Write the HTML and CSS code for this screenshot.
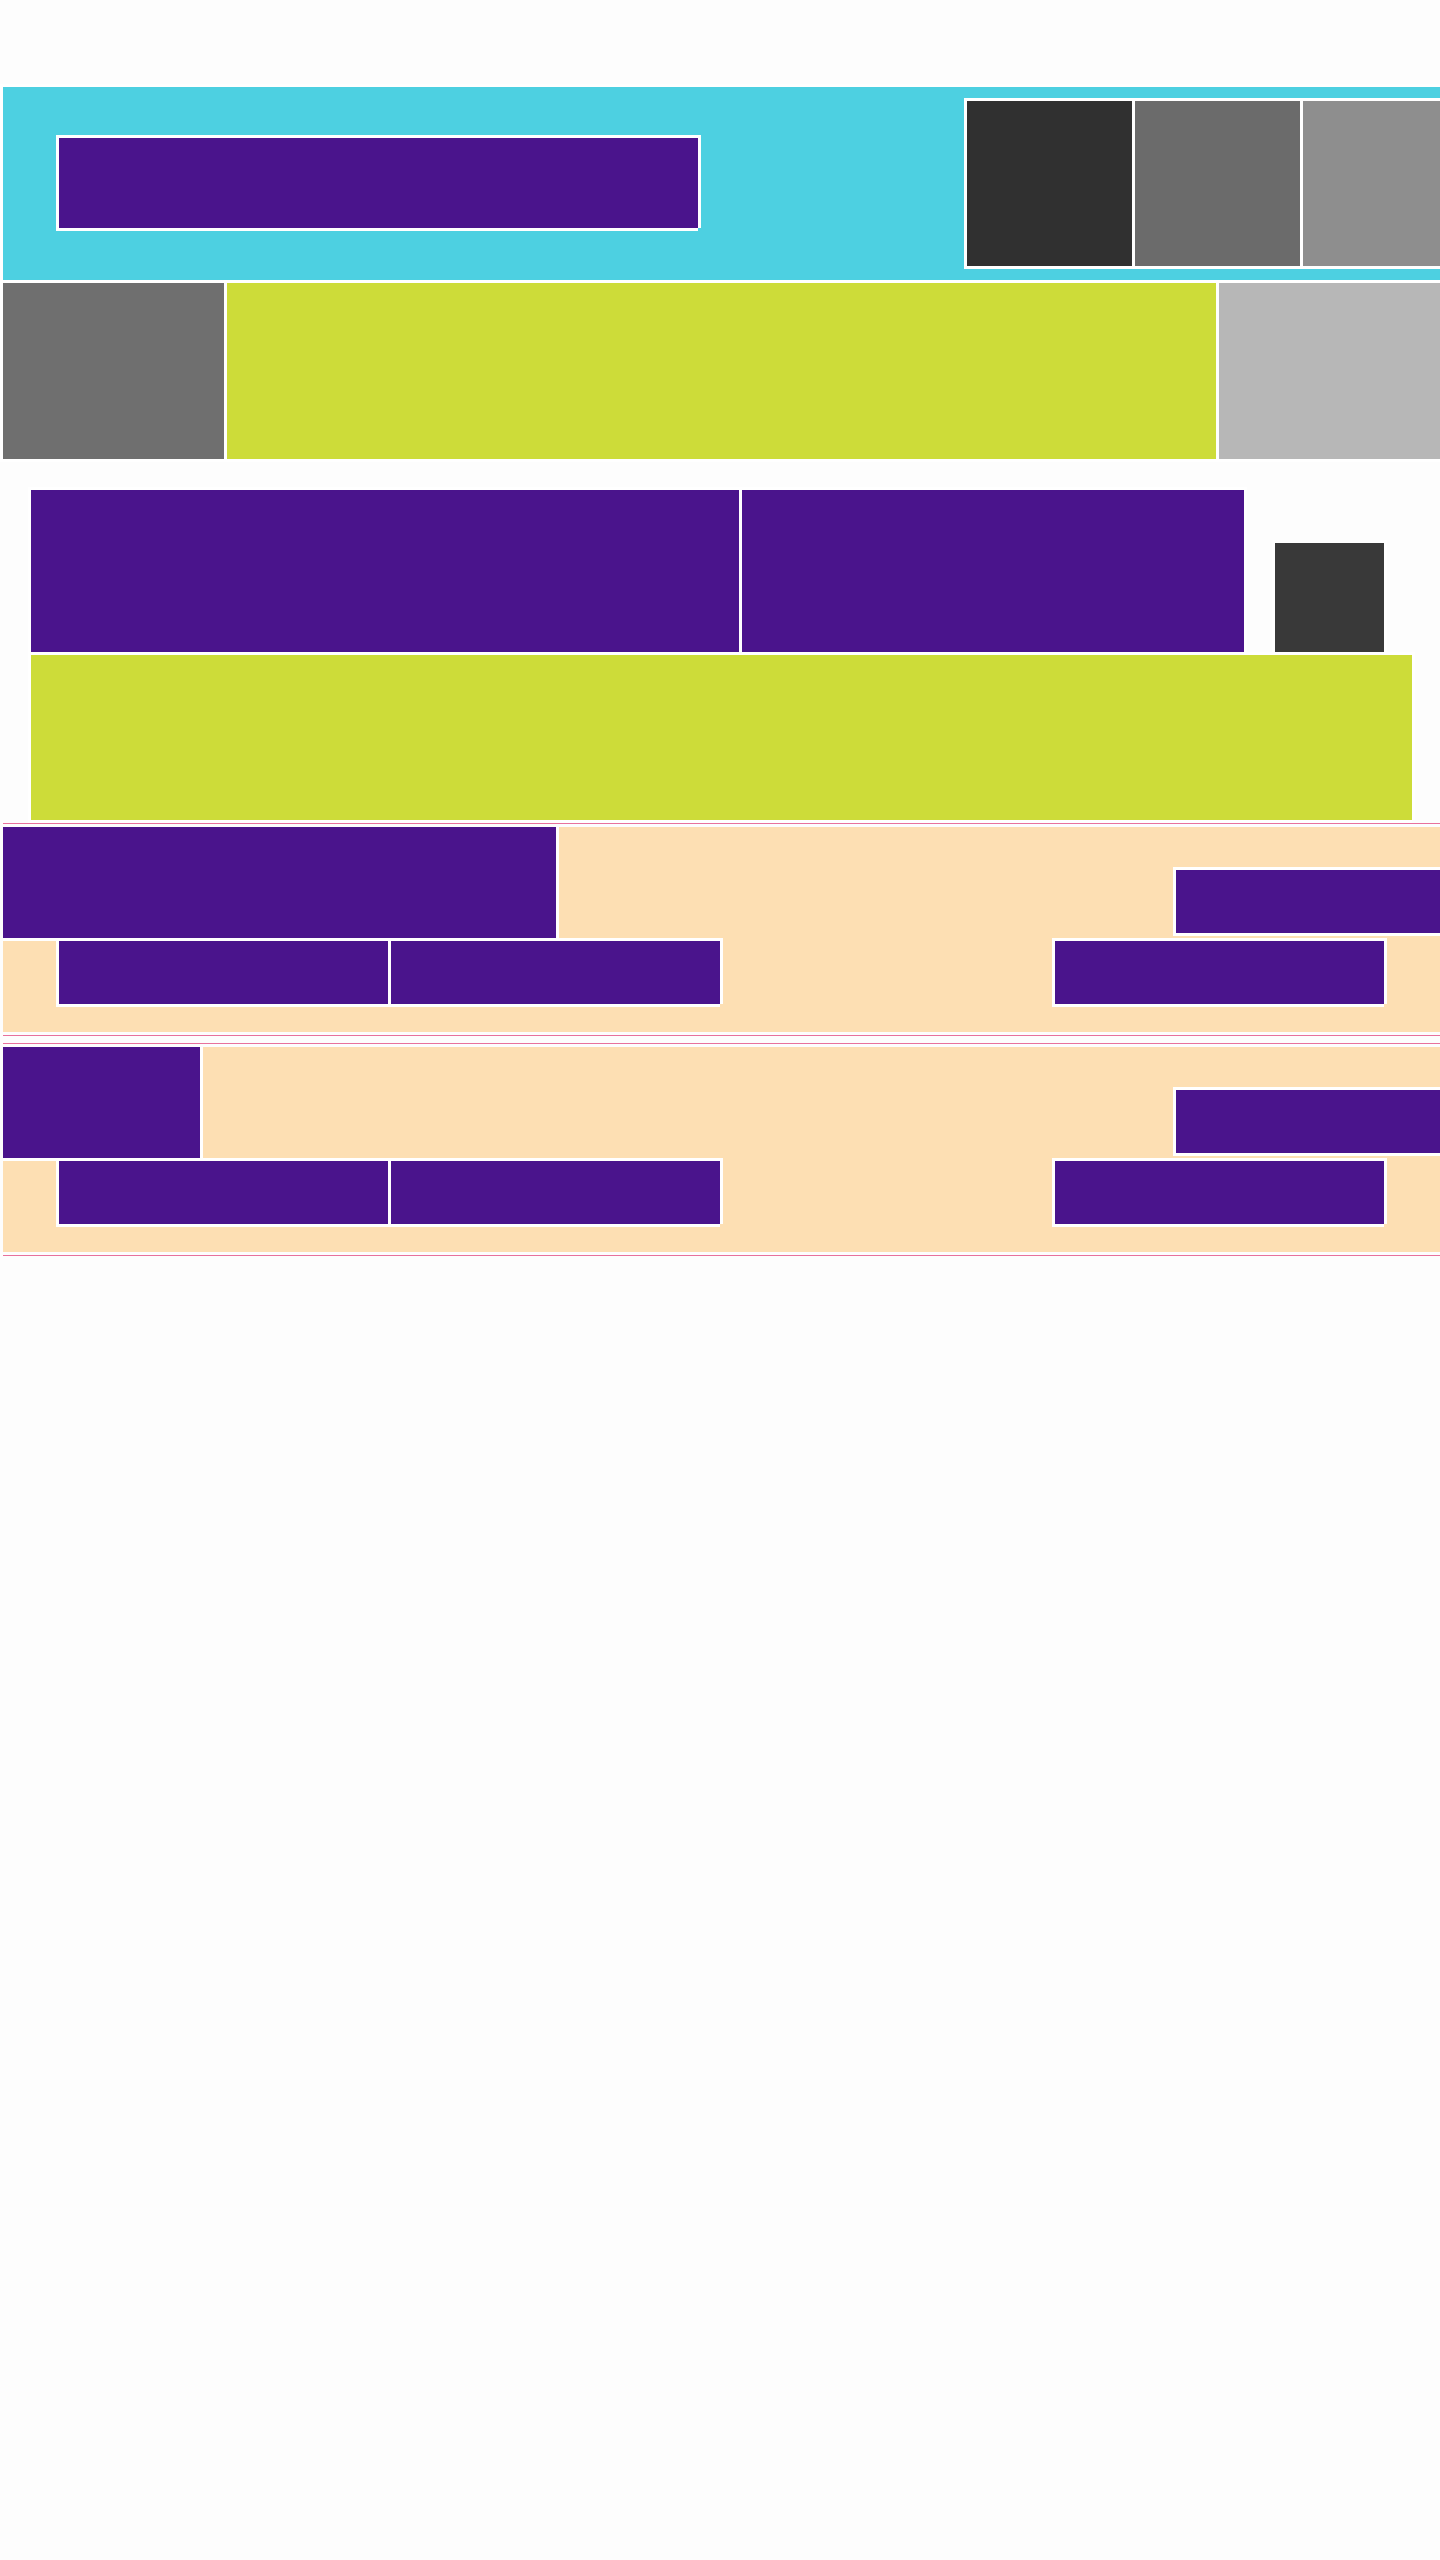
FILE: index.html
```html
<!DOCTYPE html>
<html lang="en">
<head>
<meta charset="UTF-8">
<meta name="viewport" content="width=device-width, initial-scale=1.0">
<title>Layout</title>
<link rel="stylesheet" href="styles.css">
</head>
<body>

<header class="topbar edge">
  <div class="logo edge"></div>
  <div class="thumbs">
    <div class="thumb thumb-1"></div>
    <div class="thumb thumb-2"></div>
    <div class="thumb thumb-3"></div>
  </div>
</header>

<div class="band">
  <div class="band-side edge"></div>
  <div class="band-main edge"></div>
  <div class="band-rest edge"></div>
</div>

<div class="stage">
  <div class="stage-top">
    <div class="stage-a edge"></div>
    <div class="stage-b edge"></div>
    <div class="stage-icon edge"></div>
  </div>
  <div class="stage-main edge"></div>
</div>

<section class="sect">
  <div class="card">
    <div class="card-top">
      <div class="card-title card-title-wide"></div>
      <div class="card-act edge"></div>
    </div>
    <div class="card-btns">
      <div class="btn edge"></div>
      <div class="btn edge"></div>
      <div class="btn btn-last edge"></div>
    </div>
  </div>
</section>

<section class="sect sect-next">
  <div class="card">
    <div class="card-top">
      <div class="card-title card-title-short"></div>
      <div class="card-act edge"></div>
    </div>
    <div class="card-btns">
      <div class="btn edge"></div>
      <div class="btn edge"></div>
      <div class="btn btn-last edge"></div>
    </div>
  </div>
</section>

</body>
</html>
```

FILE: styles.css
```css
html, body {
  overflow-x: hidden;
}

body {
  font-family: "Liberation Sans", Arial, sans-serif;
  background-color: #fdfdfd;
  margin: 0;
  padding: 84px 0 0 0;
}

/* white outline used around every block */
.edge {
  border-top: 3px solid #fff;
  border-left: 3px solid #fff;
  box-shadow: 3px 0 0 #fff, 0 3px 0 #fff;
}

.topbar {
  background-color: #4dd0e1;
  height: 193px;
  display: flex;
  align-items: flex-start;
  overflow: hidden;
}

.logo {
  flex-shrink: 0;
  width: 639px;
  height: 90px;
  margin: 48px 0 0 53px;
  background-color: #4a148c;
}

.thumbs {
  flex-shrink: 0;
  display: flex;
  gap: 3px;
  margin: 11px 0 0 266px;
  padding: 3px 0 3px 3px;
  background-color: #fff;
}

.thumb {
  flex-shrink: 0;
  width: 165px;
  height: 165px;
}

.thumb-1 { background-color: #303030; }
.thumb-2 { background-color: #6b6b6b; }
.thumb-3 { background-color: #8e8e8e; }

.band {
  display: flex;
  height: 179px;
}

.band-side {
  width: 221px;
  background-color: #6f6f6f;
}

.band-main {
  width: 989px;
  background-color: #cddc39;
}

.band-rest {
  flex: 1;
  background-color: #b7b7b7;
}

.stage {
  margin: 28px 0 0 28px;
  width: 1384px;
}

.stage-top {
  display: flex;
  align-items: flex-end;
}

.stage-a {
  width: 708px;
  height: 162px;
  background-color: #4a148c;
}

.stage-b {
  width: 502px;
  height: 162px;
  background-color: #4a148c;
}

.stage-icon {
  width: 109px;
  height: 109px;
  margin-left: 28px;
  background-color: #393939;
}

.stage-main {
  height: 165px;
  background-color: #cddc39;
}

.sect {
  margin: 3px 0 0 3px;
  padding: 3px 0;
  border-top: 1px solid #e8719c;
  border-bottom: 1px solid #e8719c;
}

.sect-next {
  margin-top: 7px;
}

.card {
  background-color: #fddfb3;
  padding-bottom: 28px;
}

.card-top {
  display: flex;
  align-items: flex-start;
  height: 111px;
}

.card-title {
  height: 111px;
  background-color: #4a148c;
  box-shadow: 3px 0 0 #fff, 0 3px 0 #fff;
}

.card-title-wide { width: 553px; }
.card-title-short { width: 197px; }

.card-act {
  width: 264px;
  height: 63px;
  margin: 40px 0 0 auto;
  background-color: #4a148c;
}

.card-btns {
  display: grid;
  grid-template-columns: repeat(4, 332px);
  margin-left: 53px;
}

.btn {
  width: 329px;
  height: 63px;
  background-color: #4a148c;
}

.btn-last {
  grid-column: 4;
}
```
